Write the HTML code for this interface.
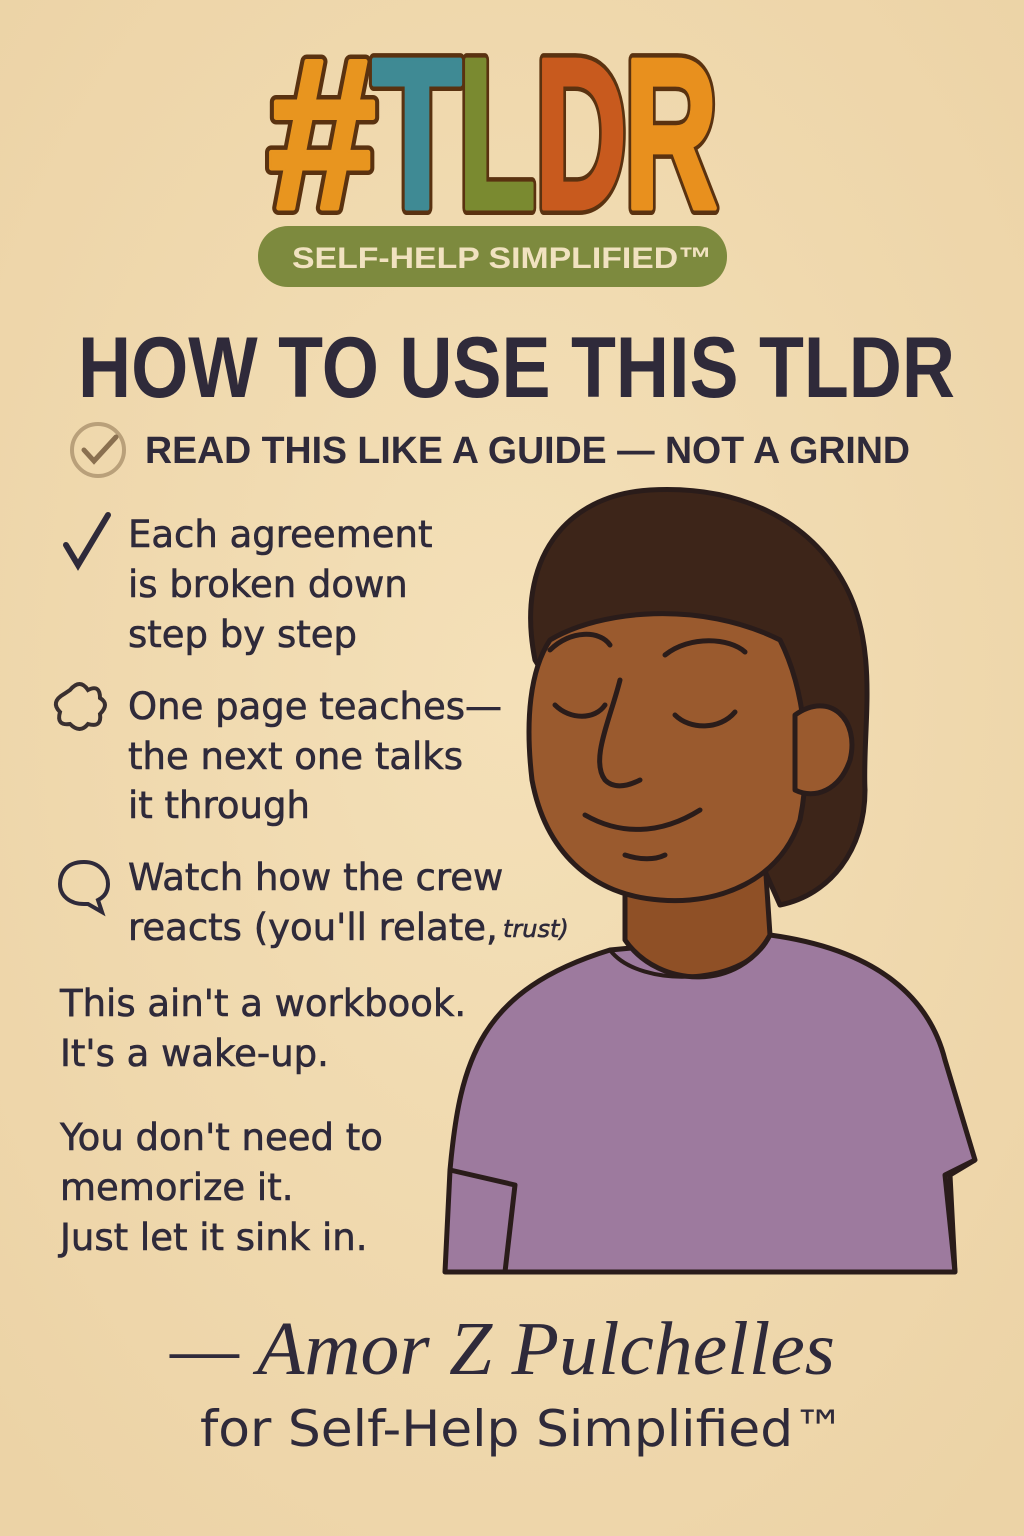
<!DOCTYPE html>
<html><head><meta charset="utf-8"><style>
html,body{margin:0;padding:0;background:#f1d9ae}
svg{display:block}
</style></head><body>
<svg width="1024" height="1536" viewBox="0 0 1024 1536" xmlns="http://www.w3.org/2000/svg">
<defs>
<radialGradient id="bg" cx="50%" cy="45%" r="70%"><stop offset="0" stop-color="#f4e0b8"/><stop offset="1" stop-color="#ecd3a6"/></radialGradient>
</defs>
<rect width="1024" height="1536" fill="url(#bg)"/>

<!-- Logo -->
<g font-family="Liberation Sans, sans-serif" font-weight="bold" font-size="215" stroke="#5a3210" stroke-width="14" paint-order="stroke" stroke-linejoin="round">
<text x="268" y="208" textLength="108" lengthAdjust="spacingAndGlyphs" fill="#e8951f">#</text>
<text x="372" y="208" textLength="90" lengthAdjust="spacingAndGlyphs" fill="#3f8a94">T</text>
<text x="458" y="208" textLength="78" lengthAdjust="spacingAndGlyphs" fill="#7a8a30">L</text>
<text x="535" y="208" textLength="92" lengthAdjust="spacingAndGlyphs" fill="#c85a1e">D</text>
<text x="624" y="208" textLength="94" lengthAdjust="spacingAndGlyphs" fill="#e8901e">R</text>
</g>
<g font-family="Liberation Sans, sans-serif" font-weight="bold" font-size="215" stroke-width="5" paint-order="stroke" stroke-linejoin="round">
<text x="268" y="208" textLength="108" lengthAdjust="spacingAndGlyphs" fill="#e8951f" stroke="#e8951f">#</text>
<text x="372" y="208" textLength="90" lengthAdjust="spacingAndGlyphs" fill="#3f8a94" stroke="#3f8a94">T</text>
<text x="458" y="208" textLength="78" lengthAdjust="spacingAndGlyphs" fill="#7a8a30" stroke="#7a8a30">L</text>
<text x="535" y="208" textLength="92" lengthAdjust="spacingAndGlyphs" fill="#c85a1e" stroke="#c85a1e">D</text>
<text x="624" y="208" textLength="94" lengthAdjust="spacingAndGlyphs" fill="#e8901e" stroke="#e8901e">R</text>
</g>
<rect x="258" y="226" width="469" height="61" rx="30" fill="#7d8a3e"/>
<text x="292" y="268" font-family="Liberation Sans, sans-serif" font-weight="bold" font-size="30" fill="#f1e2c0" textLength="420" lengthAdjust="spacingAndGlyphs">SELF-HELP SIMPLIFIED™</text>

<!-- Heading -->
<text x="78" y="397" font-family="Liberation Sans, sans-serif" font-weight="bold" font-size="86" fill="#2f2a3a" textLength="877" lengthAdjust="spacingAndGlyphs">HOW TO USE THIS TLDR</text>
<circle cx="98" cy="450" r="26" fill="none" stroke="#b9a07a" stroke-width="4"/>
<path d="M84 450 l10 11 l22 -24" fill="none" stroke="#8a7050" stroke-width="5" stroke-linecap="round"/>
<text x="145" y="463" font-family="Liberation Sans, sans-serif" font-weight="bold" font-size="38" fill="#2f2a3a" textLength="765" lengthAdjust="spacingAndGlyphs">READ THIS LIKE A GUIDE — NOT A GRIND</text>

<!-- List -->
<g font-family="DejaVu Sans, Liberation Sans, sans-serif" font-size="37" fill="#2f2a3a" stroke="#2f2a3a" stroke-width="0.6">
<path d="M66 545 l12 20 l30 -50" fill="none" stroke="#2f2a3a" stroke-width="6" stroke-linecap="round"/>
<text x="128" y="547">Each agreement</text>
<text x="128" y="597">is broken down</text>
<text x="128" y="647">step by step</text>
<path d="M70 690 q10 -12 18 0 q12 -6 12 8 q10 6 0 16 q2 14 -12 10 q-8 10 -18 0 q-14 2 -10 -12 q-10 -10 4 -18 z" fill="none" stroke="#3a3030" stroke-width="4"/>
<text x="128" y="719">One page teaches—</text>
<text x="128" y="769">the next one talks</text>
<text x="128" y="818">it through</text>
<path d="M84 862 c-20 0 -24 14 -24 22 c0 12 10 20 24 20 l4 0 l14 8 l-4 -12 c8 -4 10 -10 10 -16 c0 -10 -8 -22 -24 -22 z" fill="none" stroke="#2f2a3a" stroke-width="4"/>
<text x="128" y="890">Watch how the crew</text>
<text x="128" y="940">reacts (you'll relate,</text>
<text x="503" y="937" font-size="24" font-style="italic">trust)</text>
<text x="60" y="1016">This ain't a workbook.</text>
<text x="60" y="1066">It's a wake-up.</text>
<text x="60" y="1150">You don't need to</text>
<text x="60" y="1200">memorize it.</text>
<text x="60" y="1250">Just let it sink in.</text>
</g>

<!-- Character -->
<g stroke="#2a1c1a" stroke-width="5" stroke-linejoin="round">
<path d="M445 1272 L450 1170 C460 1060 480 990 610 950 L770 935 C880 950 930 1000 945 1060 L975 1160 L950 1175 L955 1272 Z" fill="#9d7a9e"/>
<path d="M450 1170 L515 1185 L505 1272" fill="none"/>
<path d="M975 1160 L945 1175 L955 1272" fill="none"/>
<path d="M625 860 L625 940 C660 990 740 990 770 935 L765 860 Z" fill="#8f5026"/>
<path d="M535 660 C515 560 565 495 650 490 C740 485 810 520 845 585 C880 650 862 730 865 790 C865 850 830 895 780 905 L760 860 L560 700 Z" fill="#3d2519"/>
<path d="M550 640 C600 610 700 600 780 640 C805 690 812 760 800 820 C780 880 720 905 660 900 C590 895 545 850 532 780 C525 720 530 670 550 640 Z" fill="#9a5a2e"/>
<path d="M795 715 C830 690 860 720 850 760 C840 790 815 800 795 790 Z" fill="#9a5a2e"/>
</g>
<g fill="none" stroke="#2a1c1a" stroke-width="5" stroke-linecap="round">
<path d="M550 650 C570 630 600 630 610 645"/>
<path d="M665 655 C690 635 730 638 745 652"/>
<path d="M555 705 C570 720 595 720 605 705"/>
<path d="M675 715 C690 730 720 730 735 712"/>
<path d="M620 680 C610 720 590 760 605 780 C615 790 630 785 640 780"/>
<path d="M585 815 C620 835 660 835 700 810"/>
<path d="M625 855 C640 860 655 860 665 855"/>
<path d="M610 950 C640 990 750 985 770 935" stroke-width="4"/>
</g>

<text x="170" y="1374" font-family="Liberation Serif, serif" font-style="italic" font-size="76" fill="#2f2a3a" textLength="665" lengthAdjust="spacingAndGlyphs">— Amor Z Pulchelles</text>
<text x="200" y="1446" font-family="DejaVu Sans, Liberation Sans, sans-serif" font-size="50" fill="#2f2a3a" textLength="645" lengthAdjust="spacingAndGlyphs">for Self-Help Simplified™</text>
</svg>
</body></html>
